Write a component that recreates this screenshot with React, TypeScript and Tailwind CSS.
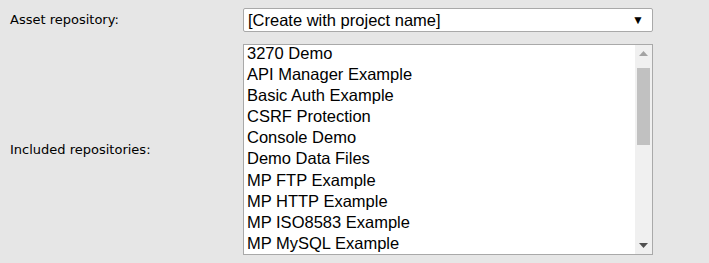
const repos = [
  "3270 Demo",
  "API Manager Example",
  "Basic Auth Example",
  "CSRF Protection",
  "Console Demo",
  "Demo Data Files",
  "MP FTP Example",
  "MP HTTP Example",
  "MP ISO8583 Example",
  "MP MySQL Example",
];

const labelFont = { fontFamily: "Tahoma, 'DejaVu Sans', sans-serif" };

const App = () => {
  return (
    <div className="w-[709px] h-[263px] bg-[#e6e6e6] pt-[8px] font-['Liberation_Sans',Arial,sans-serif] text-black">
      <div className="grid grid-cols-[243px_410px] items-center">
        <label className="pl-[10px] text-[13px] text-black" style={labelFont}>
          Asset repository:
        </label>
        <div className="h-[24px] flex items-center justify-between bg-white border border-[#a9a9a9] rounded-[2px] pl-[4px] pr-[8px] text-[16.5px] leading-none">
          <span>[Create with project name]</span>
          <span className="text-[12px]">▼</span>
        </div>
      </div>
      <div className="grid grid-cols-[243px_410px] items-center mt-[12px]">
        <label className="pl-[10px] text-[13px] text-black" style={labelFont}>
          Included repositories:
        </label>
        <div className="h-[211px] flex bg-white border border-[#a9a9a9] overflow-hidden">
          <ul className="flex-1 pl-[3px] -mt-[2px] text-[16.5px] leading-[21.1px]">
            {repos.map((r) => (
              <li key={r}>{r}</li>
            ))}
          </ul>
          <div className="w-[17px] bg-[#f0f0f0] flex flex-col items-center">
            <div className="h-[17px] flex items-center justify-center">
              <svg width="9" height="5" viewBox="0 0 9 5">
                <path d="M0 5 L4.5 0 L9 5 Z" fill="#a3a3a3" />
              </svg>
            </div>
            <div className="w-[13px] h-[77px] bg-[#c1c1c1] mt-[6px]" />
            <div className="flex-1" />
            <div className="h-[17px] flex items-center justify-center">
              <svg width="9" height="5" viewBox="0 0 9 5">
                <path d="M0 0 L9 0 L4.5 5 Z" fill="#505050" />
              </svg>
            </div>
          </div>
        </div>
      </div>
    </div>
  );
};

export default App;
